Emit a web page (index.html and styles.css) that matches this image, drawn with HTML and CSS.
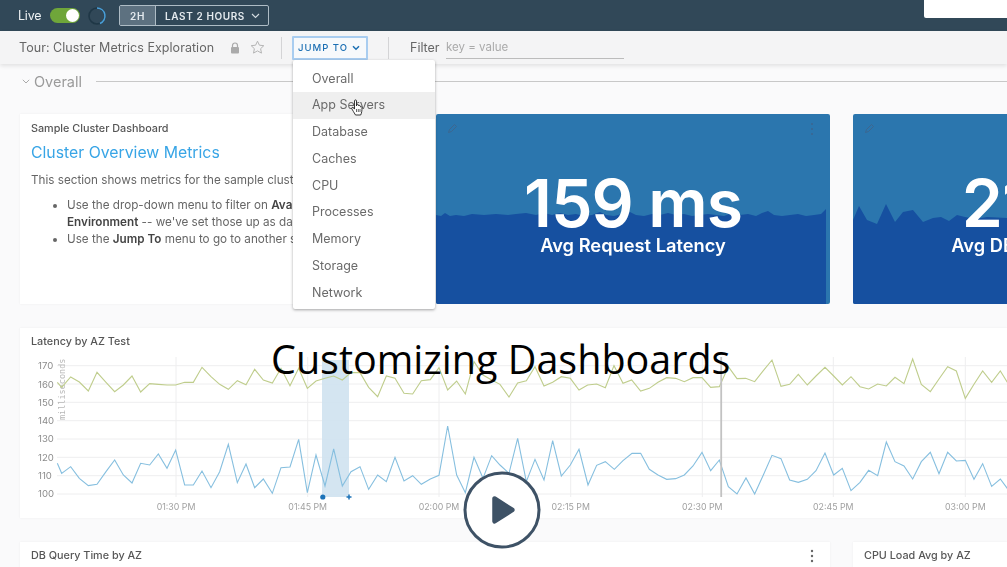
FILE: index.html
```html
<!DOCTYPE html>
<html lang="en">
<head>
<meta charset="utf-8">
<title>Customizing Dashboards</title>
<link rel="stylesheet" href="styles.css">
</head>
<body>
<div class="page">
  <div class="app">
    <header class="topbar">
      <span class="live">Live</span>
      <span class="toggle"><span class="knob"></span></span>
      <svg class="spinner" width="20" height="20" viewBox="0 0 20 20"><circle cx="10" cy="10" r="8" fill="none" stroke="#1f3746" stroke-width="1.6"/><path d="M10 2a8 8 0 0 1 3 15.4" fill="none" stroke="#4a9fd8" stroke-width="1.6"/></svg>
      <div class="range">
        <span class="range-short">2H</span>
        <span class="range-long">LAST 2 HOURS
          <svg width="9" height="6" viewBox="0 0 9 6"><path d="M1 1l3.5 3.5L8 1" fill="none" stroke="#d5dde2" stroke-width="1.1"/></svg>
        </span>
      </div>
    </header>
    <div class="toolbar">
      <span class="tour">Tour: Cluster Metrics Exploration</span>
      <svg class="lock" width="10" height="12" viewBox="0 0 10 12"><path d="M2.500 5V3.500a2.500 2.500 0 0 1 5 0V5" fill="none" stroke="#aaa" stroke-width="1.2"/><rect x="1" y="5" width="8" height="6.500" rx="1" fill="#aaa"/></svg>
      <svg class="star" width="15" height="15" viewBox="0 0 15 15"><path d="M7.500 1.200l1.900 4 4.400.5-3.200 3 .9 4.400-4-2.200-4 2.200.9-4.400-3.200-3 4.400-.5z" fill="none" stroke="#b5b5b5" stroke-width="1"/></svg>
      <span class="sep sep-a"></span>
      <button class="jump">JUMP TO
        <svg width="8" height="6" viewBox="0 0 8 6"><path d="M1 1.200l3 3 3-3" fill="none" stroke="#1b6fb3" stroke-width="1.500"/></svg>
      </button>
      <span class="sep sep-b"></span>
      <span class="filter-label">Filter</span>
      <span class="filter-input">key = value</span>
    </div>
    <main class="content">
      <div class="section-head">
        <svg width="8" height="5" viewBox="0 0 8 5"><path d="M.8.8L4 4l3.200-3.200" fill="none" stroke="#aaa" stroke-width="1"/></svg>
        <span class="section-title">Overall</span>
        <span class="section-line"></span>
      </div>
      <div class="row row-top">
        <section class="card text-card">
          <h3 class="card-title">Sample Cluster Dashboard</h3>
          <h2 class="overview">Cluster Overview Metrics</h2>
          <p class="intro">This section shows metrics for the sample cluster.</p>
          <ul class="notes">
            <li>Use the drop-down menu to filter on <b>Availability Zone</b> and<br><b>Environment</b> -- we've set those up as dashboard variables.</li>
            <li>Use the <b>Jump To</b> menu to go to another section.</li>
          </ul>
        </section>
        <section class="stat">
          <svg class="stat-wave" width="394" height="190" viewBox="0 0 394 190"><polygon fill="#1650a0" points="0,190 0,101 5,102 9,99 14,102 20,101 28,102 36,100 48,101 60,100 72,101 80,100 90,99 100,101 108,99 116,101 124,99 132,101 140,100 148,102 156,101 164,98 170,101 178,102 186,100 194,98 200,101 208,102 216,100 224,101 232,99 240,101 248,100 256,102 264,101 272,100 280,101 288,102 296,99 304,101 312,100 320,102 326,99 332,97 338,101 346,102 354,101 362,100 370,102 378,101 385,100 390,95 390,190"/></svg>
          <svg class="stat-edit" width="11" height="11" viewBox="0 0 11 11"><path d="M1.500 9.500l1-3 5-5 2 2-5 5z" fill="none" stroke="#3d668f" stroke-width="1"/></svg>
          <svg class="stat-more" width="4" height="14" viewBox="0 0 4 14"><g fill="#3d668f"><circle cx="2" cy="2" r="1"/><circle cx="2" cy="7" r="1"/><circle cx="2" cy="12" r="1"/></g></svg>
          <div class="stat-text">
            <span class="stat-value">159 ms</span>
            <span class="stat-label">Avg Request Latency</span>
          </div>
        </section>
        <section class="stat">
          <svg class="stat-wave" width="394" height="190" viewBox="0 0 394 190"><polygon fill="#1650a0" points="0,190 0,106 6,92 14,106 24,110 33,90 42,108 50,98 60,96 70,108 80,104 88,103 96,107 104,101 112,103 122,105 134,103 154,104 394,104 394,190"/></svg>
          <svg class="stat-edit" width="11" height="11" viewBox="0 0 11 11"><path d="M1.500 9.500l1-3 5-5 2 2-5 5z" fill="none" stroke="#3d668f" stroke-width="1"/></svg>
          <div class="stat-text">
            <span class="stat-value">21 ms</span>
            <span class="stat-label">Avg DB Query Latency</span>
          </div>
        </section>
      </div>
      <section class="card chart-card">
        <h3 class="card-title">Latency by AZ Test</h3>
        <svg class="chart" width="987" height="164" viewBox="20 354 987 164">
          <g class="grid">
            <path d="M57 365.700H1007M57 384H1007M57 402.300H1007M57 420.700H1007M57 439H1007M57 457.300H1007M57 475.700H1007M57 494H1007"/>
            <path d="M176 357V497M307.700 357V497M439 357V497M570.700 357V497M702.300 357V497M833.300 357V497M965.300 357V497"/>
          </g>
          <rect class="band" x="322" y="360" width="27" height="137"/>
          <g class="axis-y">
            <text x="38" y="369">170</text><text x="38" y="387.500">160</text><text x="38" y="405.500">150</text><text x="38" y="424">140</text><text x="38" y="442">130</text><text x="38" y="460.500">120</text><text x="38" y="478.500">110</text><text x="38" y="497">100</text>
          </g>
          <text class="axis-unit" transform="translate(65 420) rotate(-90)">milliseconds</text>
          <g transform="translate(0 325) scale(.33333)">
            <polyline class="line-green" points="172,172 185,187 212,156 238,171 265,198 291,142 318,172 344,200 370,180 396,153 422,201 449,176 475,178 501,180 527,180 554,172 580,172 606,127 633,155 659,178 685,193 712,167 738,179 764,133 790,165 817,174 843,130 870,182 896,130 922,190 948,168 975,160 1001,153 1027,165 1053,143 1080,143 1106,187 1133,215 1159,153 1185,160 1212,205 1238,207 1264,167 1291,164 1317,128 1343,195 1370,168 1396,207 1422,110 1449,150 1475,165 1500,178 1527,216 1553,174 1579,167 1605,125 1632,183 1658,172 1684,155 1711,160 1737,195 1763,180 1790,177 1816,188 1842,122 1869,175 1895,165 1922,198 1948,190 1974,172 2000,158 2027,160 2053,170 2079,158 2106,158 2132,187 2158,185 2185,125 2211,161 2237,160 2264,170 2290,137 2316,105 2343,184 2369,178 2395,148 2422,180 2448,153 2475,127 2501,153 2527,180 2553,155 2580,185 2606,192 2633,177 2659,183 2685,157 2712,176 2738,102 2764,178 2791,200 2817,162 2843,125 2869,138 2896,220 2922,178 2948,138 2975,172 3001,138 3027,180"/>
            <polyline class="line-blue" points="172,415 185,445 212,425 238,460 265,482 291,478 318,440 344,405 370,450 396,474 422,415 449,420 475,387 501,430 527,375 554,480 580,480 606,438 633,488 659,440 685,358 712,473 738,417 764,488 790,462 817,505 843,428 870,426 896,343 922,503 948,390 975,483 1001,372 1027,483 1053,440 1080,425 1106,493 1133,450 1159,470 1185,397 1212,468 1238,452 1264,478 1291,462 1317,451 1343,303 1370,450 1396,503 1422,397 1449,460 1475,392 1500,420 1527,445 1553,340 1579,470 1605,403 1632,465 1658,347 1684,453 1711,420 1737,373 1764,480 1790,421 1816,410 1843,433 1869,407 1896,385 1922,385 1948,433 1974,450 2000,463 2027,461 2053,450 2079,423 2106,382 2132,437 2158,405 2185,485 2211,507 2238,459 2264,507 2290,450 2316,391 2343,401 2369,465 2395,472 2422,463 2448,437 2475,384 2501,450 2527,430 2553,497 2580,472 2606,436 2633,452 2659,351 2685,410 2712,423 2738,462 2764,410 2791,382 2817,446 2843,382 2869,408 2896,406 2922,463 2948,416 2975,484 3001,462 3027,497"/>
          </g>
          <rect class="cursor-line" x="720.300" y="357" width="1.800" height="140"/>
          <circle class="marker" cx="322.800" cy="497" r="2.600"/>
          <path class="marker-plus" d="M349 494.500v5M346.500 497h5"/>
          <g class="axis-x">
            <text x="176" y="510">01:30 PM</text><text x="307.700" y="510">01:45 PM</text><text x="439" y="510">02:00 PM</text><text x="570.700" y="510">02:15 PM</text><text x="702.300" y="510">02:30 PM</text><text x="833.300" y="510">02:45 PM</text><text x="965.300" y="510">03:00 PM</text>
          </g>
        </svg>
      </section>
      <div class="row row-bottom">
        <section class="card wide-card">
          <h3 class="card-title">DB Query Time by AZ</h3>
          <svg class="more" width="4" height="14" viewBox="0 0 4 14"><g fill="#666"><circle cx="2" cy="2" r="1.200"/><circle cx="2" cy="7" r="1.200"/><circle cx="2" cy="12" r="1.200"/></g></svg>
        </section>
        <section class="card side-card">
          <h3 class="card-title">CPU Load Avg by AZ</h3>
        </section>
      </div>
    </main>
    <ul class="menu">
      <li>Overall</li>
      <li class="hover">App Servers</li>
      <li>Database</li>
      <li>Caches</li>
      <li>CPU</li>
      <li>Processes</li>
      <li>Memory</li>
      <li>Storage</li>
      <li>Network</li>
    </ul>
    <svg class="hand" width="13" height="17" viewBox="0 0 13 17"><path d="M3.500 1.800c0-1.200 2-1.200 2 0V7l.2-1c.3-1 1.700-.8 1.800.2l.2.800c.3-.9 1.600-.7 1.700.3l.1.700c.4-.7 1.500-.4 1.500.5 0 3-.2 5-1.300 7.500H4.500C3 13.500 1.800 11.500.8 9.800c-.6-1 .8-2 1.600-1l1.100 1.300z" fill="#fff" stroke="#222" stroke-width=".9" stroke-linejoin="round"/><path d="M5.500 10v3M7.300 10v3M9 10v3" stroke="#222" stroke-width=".7"/></svg>
    <div class="corner-box"></div>
  </div>
  <div class="caption">Customizing Dashboards</div>
  <svg class="play" width="78" height="78" viewBox="0 0 78 78"><circle cx="39" cy="39" r="37" fill="#fff" stroke="#3e5266" stroke-width="3"/><path d="M30 27.500v23a1.500 1.500 0 0 0 2.300 1.200l18-11.500a1.500 1.500 0 0 0 0-2.500l-18-11.500a1.500 1.500 0 0 0-2.300 1.200z" fill="#3e5266" stroke="#3e5266" stroke-width="1.500"/></svg>
</div>
</body>
</html>
```

FILE: styles.css
```css
* { box-sizing: border-box; }
html, body { margin: 0; height: 100%; }
body { overflow: hidden; background: #fafafb; font-family: Inter, "Open Sans", sans-serif; }
.page { position: relative; width: 1007px; height: 567px; overflow: hidden; }
.app { position: relative; width: 1007px; height: 567px; overflow: hidden; filter: blur(.35px); background: #fafafb; }

.topbar { display: flex; align-items: center; height: 31px; padding-left: 18px; background: #314858; color: #fff; }
.live { width: 32px; font-size: 12.500px; letter-spacing: -.2px; color: #eef2f4; }
.toggle { display: flex; justify-content: flex-end; align-items: center; width: 30px; height: 15px; padding-right: 1px; border-radius: 8px; background: #6fa63a; }
.knob { width: 13px; height: 13px; border-radius: 50%; background: #fff; }
.spinner { margin-left: 7px; }
.range { display: flex; align-items: stretch; height: 21px; margin-left: 12px; border: 1px solid #aebcc5; border-radius: 2px; font-size: 10px; font-weight: 600; letter-spacing: .6px; color: #e4eaee; }
.range-short { display: flex; align-items: center; justify-content: center; width: 36px; background: #5d7180; border-right: 1px solid #aebcc5; }
.range-long { display: flex; align-items: center; gap: 6px; padding: 0 8px 0 9px; }

.toolbar { position: relative; z-index: 1; display: flex; align-items: center; height: 33px; padding-left: 19px; background: #f4f4f5; box-shadow: 0 2px 4px rgba(0,0,0,.1); color: #666; }
.tour { width: 206px; font-size: 12.500px; white-space: nowrap; letter-spacing: .05px; }
.lock { margin-left: 5px; }
.star { margin-left: 10px; }
.sep { width: 1px; height: 22px; background: #d4d4d6; }
.sep-a { margin-left: 16px; }
.jump { display: flex; align-items: center; gap: 4px; width: 76px; height: 24px; margin: 0 20px 0 10px; padding: 0 4px; border: 2px solid #a9cdf0; border-radius: 1px; background: #f7f9fb; color: #1b6fb3; font: 500 9.500px Inter, sans-serif; letter-spacing: 1px; white-space: nowrap; }
.filter-label { width: 36px; margin-left: 21px; font-size: 12.500px; }
.filter-input { width: 178px; height: 22px; padding-top: 3px; border-bottom: 1px solid #bcbcbc; font-size: 11.500px; color: #aaa; }

.content { padding-left: 20px; }
.section-head { display: flex; align-items: center; height: 36px; padding-bottom: 1px; }
.section-head svg { margin-left: 2px; }
.section-title { margin-left: 4px; font-size: 14.500px; color: #9b9b9b; }
.section-line { flex: 1; height: 1px; margin-left: 14px; background: #c8c8c8; }

.row { display: flex; gap: 23px; }
.row-top { height: 190px; margin-top: 14px; }
.row-bottom { margin-top: 24px; }
.card { position: relative; background: #fff; box-shadow: 0 0 2px rgba(0,0,0,.06); color: #555; }
.card-title { margin: 0; font-size: 10.800px; font-weight: 500; color: #565656; }

.text-card { flex: 0 0 393px; padding: 8px 11px; overflow: hidden; }
.overview { margin: 8px 0 0; font-size: 15.800px; font-weight: 400; color: #38a5e6; white-space: nowrap; }
.intro { margin: 11px 0 0; font-size: 11.700px; color: #666; white-space: nowrap; }
.notes { margin: 10px 0 0; padding-left: 36px; font-size: 11.700px; line-height: 17px; color: #666; white-space: nowrap; }
.notes b { font-weight: 600; color: #444; }

.stat { position: relative; flex: 0 0 394px; height: 190px; overflow: hidden; border-radius: 2px; background: #2b76ae; color: #fff; }
.stat-wave { position: absolute; left: 0; top: 0; }
.stat-edit { position: absolute; left: 11px; top: 9px; }
.stat-more { position: absolute; right: 16px; top: 8px; }
.stat-text { position: relative; display: flex; flex-direction: column; align-items: center; height: 100%; padding-top: 53px; }
.stat-value { font-size: 66px; line-height: 72px; font-weight: 600; letter-spacing: -1px; white-space: nowrap; }
.stat-label { margin-top: -4px; font-size: 18.300px; line-height: 20px; font-weight: 600; white-space: nowrap; }

.chart-card { height: 190px; margin-top: 24px; padding-top: 7px; overflow: hidden; }
.chart-card .card-title { height: 19px; padding-left: 11px; }
.chart { display: block; }
.grid path { fill: none; stroke: #eeeeef; stroke-width: 1; }
.band { fill: #cfe2f0; opacity: .9; }
.line-green, .line-blue { fill: none; stroke-width: 1.100; vector-effect: non-scaling-stroke; }
.line-green { stroke: #bfcd8c; }
.line-blue { stroke: #86bfdf; }
.axis-y text { font: 9.600px Inter, sans-serif; fill: #8c8c8c; text-anchor: start; }
.axis-unit { font: 8.500px "DejaVu Sans Mono", monospace; fill: #b8b8b8; }
.axis-x text { font: 8.800px Inter, sans-serif; fill: #a0a0a0; text-anchor: middle; }
.cursor-line { fill: #c2c2c2; }
.marker { fill: #1b72b8; }
.marker-plus { fill: none; stroke: #1b72b8; stroke-width: 1.500; }

.wide-card { flex: 0 0 810px; height: 40px; padding: 7px 11px; }
.side-card { flex: 1; height: 40px; padding: 7px 11px; }
.more { position: absolute; right: 16px; top: 7px; }

.menu { position: absolute; left: 293px; top: 60px; z-index: 2; width: 142px; height: 249px; margin: 0; padding: 5.500px 0 0; list-style: none; background: #fff; border-radius: 2px; box-shadow: 0 1px 3px rgba(0,0,0,.35); font-size: 12.500px; color: #6a6a6a; }
.menu li { height: 26.800px; padding-left: 19px; line-height: 26.800px; }
.menu .hover { background: #efefef; }
.hand { position: absolute; left: 351px; top: 99px; z-index: 3; }
.corner-box { position: absolute; right: 0; top: 0; width: 83px; height: 18px; background: #fff; border-bottom-left-radius: 2px; }

.caption { position: absolute; left: 271px; top: 332px; font: 39.500px/54px "Open Sans", sans-serif; color: #000; white-space: nowrap; }
.play { position: absolute; left: 463px; top: 471px; }
```
